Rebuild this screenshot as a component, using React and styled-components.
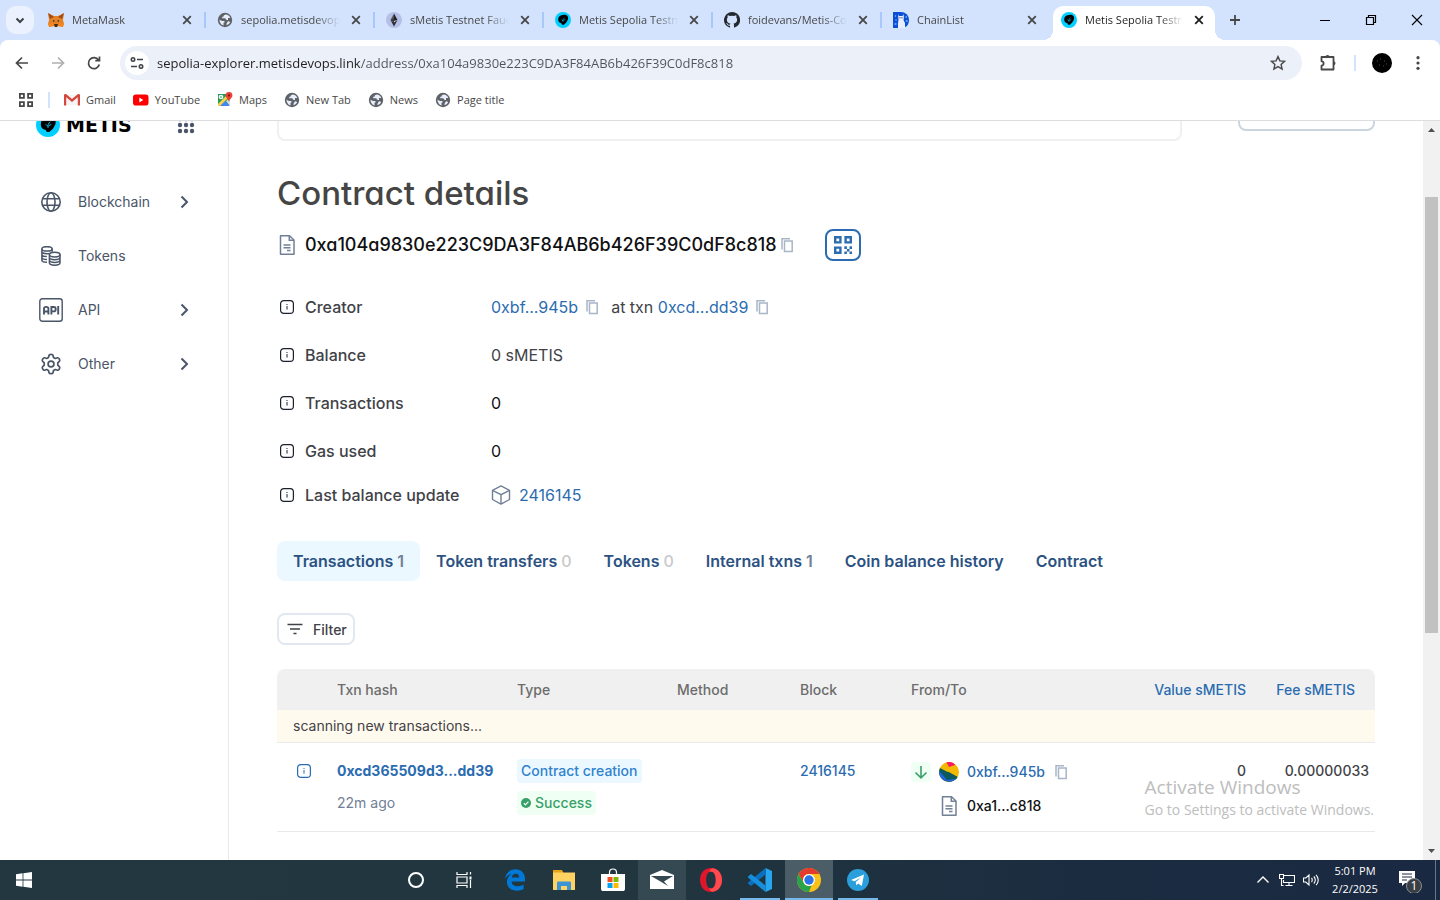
import React from "react";
import styled, { createGlobalStyle, css } from "styled-components";

const ui = '"Open Sans", "Noto Sans", sans-serif';
const body = 'Inter, "Liberation Sans", sans-serif';

const GlobalStyle = createGlobalStyle`
  *, *::before, *::after { box-sizing: border-box; }
  body { margin: 0; background: #fff; font-family: ${body}; color: #3f4247; }
  button, input { font: inherit; color: inherit; margin: 0; padding: 0; border: 0; background: none; }
  a { color: inherit; text-decoration: none; }
  svg { display: block; flex: none; }
  h1, h2, dl, dd, dt, ul, p { margin: 0; padding: 0; font-weight: inherit; }
  ul { list-style: none; }
`;

const Desktop = styled.div`
  display: flex;
  flex-direction: column;
  height: 100vh;
  overflow: hidden;
`;

/* ---------- browser frame ---------- */

const TabStrip = styled.header`
  display: flex;
  flex: none;
  height: 40px;
  background: #d3e3fd;
  font-family: ${ui};
  font-size: 11px;
`;

const TabSearch = styled.button`
  display: grid;
  place-items: center;
  width: 28px;
  height: 28px;
  margin: 6px 3px 0 6px;
  border-radius: 10px;
  background: #ebf2fe;
`;

const Tab = styled.div`
  position: relative;
  display: flex;
  align-items: center;
  gap: 8px;
  flex: 0 1 169px;
  min-width: 0;
  height: 40px;
  padding: 0 11px;
  color: #474747;
  ${(p) =>
    p.$separator &&
    css`
      &::after {
        content: "";
        position: absolute;
        right: 0;
        top: 12px;
        width: 2px;
        height: 16px;
        background: #a8c7fa;
      }
    `}
  ${(p) =>
    p.$active &&
    css`
      flex-basis: 162px;
      height: 34px;
      margin: 6px 0 0 2px;
      padding: 0 8px 6px;
      border-radius: 10px 10px 0 0;
      background: #fff;
      color: #1f1f1f;
      &::before,
      &::after {
        content: "";
        position: absolute;
        bottom: 0;
        width: 10px;
        height: 10px;
      }
      &::before {
        left: -10px;
        background: radial-gradient(circle at 0 0, transparent 10px, #fff 10px);
      }
      &::after {
        right: -10px;
        background: radial-gradient(circle at 100% 0, transparent 10px, #fff 10px);
      }
    `}
`;

const TabTitle = styled.span`
  flex: 1;
  min-width: 0;
  overflow: hidden;
  white-space: nowrap;
  line-height: 20px;
  mask-image: linear-gradient(90deg, #000 calc(100% - 24px), transparent);
`;

const IconButton = styled.button`
  display: grid;
  place-items: center;
  flex: none;
  width: ${(p) => p.$w || 16}px;
  height: ${(p) => p.$h || 16}px;
  color: ${(p) => p.$color || "#474747"};
`;

const WindowControls = styled.div`
  display: flex;
  margin-left: auto;
`;

const ToolbarBack = styled.div`
  flex: none;
  background: #d3e3fd;
`;

const Toolbar = styled.div`
  display: flex;
  align-items: center;
  height: 46px;
  padding: 0 4px;
  background: #fff;
  border-radius: 8px 8px 0 0;
`;

const Omnibox = styled.form`
  display: flex;
  align-items: center;
  flex: 1;
  height: 34px;
  margin: 0 8px;
  padding: 0 16px 0 5px;
  border-radius: 17px;
  background: #ecf0f9;
`;

const SiteInfo = styled.button`
  display: grid;
  place-items: center;
  width: 24px;
  height: 24px;
  border-radius: 12px;
  background: #fff;
`;

const Url = styled.input`
  flex: 1;
  min-width: 0;
  height: 24px;
  margin-left: 8px;
  outline: 0;
  font-family: ${ui};
  font-size: 13px;
  background: linear-gradient(90deg, #1f1f1f 204px, #50545a 204px);
  background-clip: text;
  -webkit-text-fill-color: transparent;
`;

const Rule = styled.span`
  width: 2px;
  height: 16px;
  background: #d3e3fd;
`;

const ToolbarRule = styled(Rule)`
  margin: 0 8px;
`;

const Bookmarks = styled.nav`
  display: flex;
  align-items: center;
  flex: none;
  height: 35px;
  padding: 0 18px 6px;
  border-bottom: 1px solid #dcdde0;
  background: #fff;
  font-family: ${ui};
  font-size: 11px;
  line-height: 16px;
  color: #474747;
`;

const BookmarkList = styled.div`
  display: flex;
  gap: 17px;
  margin-left: 14px;
`;

const BookmarkRule = styled(Rule)`
  margin: 0 0 0 14px;
`;

const Bookmark = styled.a`
  display: flex;
  align-items: center;
  gap: 6px;
`;

/* ---------- page ---------- */

const Viewport = styled.div`
  position: relative;
  display: flex;
  flex: 1;
  min-height: 0;
  overflow: hidden;
`;

const Sidebar = styled.aside`
  flex: none;
  width: 229px;
  padding: 0 36px;
  border-right: 1px solid #e8e9eb;
  color: #4a5568;
`;

const Brand = styled.div`
  display: flex;
  align-items: center;
  justify-content: space-between;
  height: 24px;
  margin: -8px -6px 47px 0;
`;

const Logo = styled.a`
  display: flex;
  align-items: center;
  gap: 6px;
  font-family: "DejaVu Sans", sans-serif;
  font-size: 19px;
  line-height: 24px;
  font-weight: 700;
  color: #000;
`;

const NavItem = styled.button`
  display: flex;
  align-items: center;
  width: 100%;
  height: 36px;
  margin-bottom: 18px;
  font-size: 14px;
  line-height: 20px;
`;

const NavIcon = styled.span`
  display: grid;
  place-items: center;
  width: 30px;
  margin-right: 12px;
`;

const NavLabel = styled.span`
  flex: 1;
  text-align: left;
`;

const Main = styled.main`
  flex: 1;
  min-width: 0;
  padding: 0 48px;
`;

const TopBar = styled.div`
  display: flex;
  align-items: flex-start;
  gap: 56px;
  margin: -30px 0 32px;
`;

const Search = styled.input`
  flex: 1;
  min-width: 0;
  height: 50px;
  padding: 0 16px;
  border: 2px solid #f0f0f1;
  border-radius: 8px;
`;

const Connect = styled.button`
  width: 137px;
  height: 40px;
  border: 2px solid #cbd5e0;
  border-radius: 8px;
`;

const Title = styled.h1`
  font-size: 33px;
  line-height: 40px;
  font-weight: 500;
  font-feature-settings: "cv11";
  color: #454545;
`;

const AddressRow = styled.div`
  display: flex;
  align-items: center;
  height: 32px;
  margin: 16px 0 34px;
`;

const Address = styled.h2`
  margin: 0 2px 0 8px;
  font-size: 18px;
  line-height: 24px;
  font-weight: 500;
  font-feature-settings: "cv11";
  color: #101112;
`;

const QrButton = styled.button`
  display: grid;
  place-items: center;
  width: 36px;
  height: 32px;
  margin-left: 30px;
  border: 2px solid #2b6cb0;
  border-radius: 8px;
  color: #2b6cb0;
`;

const Detail = styled.div`
  display: flex;
  align-items: center;
  height: 24px;
  margin-top: ${(p) => (p.$tight ? 20 : 24)}px;
  font-size: 16px;
  line-height: 24px;
  &:first-child { margin-top: 0; }
`;

const Term = styled.dt`
  display: flex;
  align-items: center;
  gap: 8px;
  width: 214px;
  font-weight: 500;
`;

const Value = styled.dd`
  display: flex;
  align-items: center;
  gap: ${(p) => (p.$wide ? 8 : 6)}px;
  color: ${(p) => (p.$dark ? "#101112" : "inherit")};
`;

const Link = styled.a`
  color: #2b6cb0;
  font-weight: ${(p) => (p.$bold ? 700 : p.$medium ? 500 : 400)};
`;

const AtTxn = styled.span`
  margin-left: 5px;
`;

const PageTabs = styled.div`
  display: flex;
  margin: 34px 0 32px;
`;

const PageTab = styled.button`
  height: 40px;
  padding: 0 16px;
  border-radius: 8px;
  background: ${(p) => (p.$active ? "#ebf8ff" : "transparent")};
  font-size: 16px;
  line-height: 24px;
  font-weight: 600;
  color: #2c5282;
`;

const Count = styled.span`
  font-weight: ${(p) => (p.$empty ? 500 : 600)};
  color: ${(p) => (p.$empty ? "#c8c9cb" : "#718096")};
`;

const FilterButton = styled.button`
  display: flex;
  align-items: center;
  gap: 8px;
  height: 32px;
  padding: 0 6px;
  border: 2px solid #e2e8f0;
  border-radius: 8px;
  font-size: 14px;
  font-weight: 500;
`;

const Table = styled.table`
  width: 100%;
  margin-top: 24px;
  border-collapse: separate;
  border-spacing: 0;
  table-layout: fixed;
  font-size: 14px;
  line-height: 20px;
`;

const Col = styled.col`
  width: ${(p) => p.$w};
`;

const Th = styled.th`
  height: 41px;
  padding: 0 ${(p) => (p.$last ? 20 : 6)}px 0 6px;
  background: #f0f0f0;
  text-align: ${(p) => (p.$right ? "right" : "left")};
  font-weight: 500;
  color: ${(p) => (p.$right ? "#2b6cb0" : "#6c6c6c")};
  white-space: nowrap;
  &:first-child { border-radius: 8px 0 0 0; }
  &:last-child { border-radius: 0 8px 0 0; }
`;

const Notice = styled.td`
  height: 33px;
  padding: 0 16px;
  border-bottom: 1px solid #e8e9eb;
  background: #fffaee;
`;

const Td = styled.td`
  height: 89px;
  padding: 16px 6px 0;
  border-bottom: 1px solid #e8e9eb;
  vertical-align: top;
  line-height: 24px;
  white-space: nowrap;
  font-weight: ${(p) => (p.$right ? 500 : 400)};
  text-align: ${(p) => (p.$right ? "right" : "left")};
`;

const Stack = styled.div`
  display: flex;
  flex-direction: column;
  align-items: flex-start;
  gap: 8px;
`;

const Muted = styled.span`
  color: #718096;
`;

const InfoButton = styled.button`
  display: grid;
  place-items: center;
  width: 100%;
  height: 24px;
  color: #2b6cb0;
`;

const Tag = styled.span`
  display: flex;
  align-items: center;
  gap: 4px;
  height: 24px;
  padding: 0 4px;
  border-radius: 4px;
  font-weight: 500;
  background: ${(p) => (p.$green ? "#f0fff4" : "#ebf8ff")};
  color: ${(p) => (p.$green ? "#38a169" : "#3182ce")};
`;

const Party = styled.div`
  display: flex;
  align-items: center;
  gap: 8px;
  height: 26px;
  padding-left: ${(p) => (p.$indent ? 28 : 0)}px;
  font-weight: 500;
  color: #101112;
`;

const Arrow = styled.span`
  display: grid;
  place-items: center;
  width: 20px;
  height: 20px;
  border-radius: 4px;
  background: #f0fff4;
  color: #38a169;
`;

const ScrollBar = styled.div`
  display: flex;
  flex-direction: column;
  flex: none;
  width: 17px;
  background: #f1f1f1;
`;

const ScrollSpace = styled.div`
  flex: ${(p) => p.$grow} 0 0;
`;

const Thumb = styled.div`
  flex: 436 0 0;
  margin: 0 2px;
  background: #c1c1c1;
`;

const Watermark = styled.div`
  position: absolute;
  right: 66px;
  bottom: 40px;
  font-family: ${ui};
  color: #bdbdbd;
  font-size: 14px;
  line-height: 20px;
  pointer-events: none;
`;

const WatermarkTitle = styled.p`
  font-size: 19px;
  line-height: 26px;
`;

/* ---------- taskbar ---------- */

const Taskbar = styled.footer`
  display: flex;
  flex: none;
  height: 40px;
  background: linear-gradient(90deg, #22373f 0%, #21363f 45%, #1b2c40 75%, #1a2942 100%);
  color: #fff;
  font-family: ${ui};
  font-size: 11px;
`;

const TaskGroup = styled.div`
  display: flex;
  gap: ${(p) => p.$gap || 0}px;
  margin-left: ${(p) => p.$left || 0}px;
`;

const Task = styled.button`
  display: grid;
  place-items: center;
  width: 48px;
  height: 40px;
  background: ${(p) => (p.$active ? "#4b5d66" : p.$hover ? "#344951" : "transparent")};
  ${(p) =>
    p.$running &&
    css`
      background-image: linear-gradient(#76b9ed, #76b9ed);
      background-repeat: no-repeat;
      background-position: bottom;
      background-size: ${p.$active ? 48 : 40}px 2px;
    `}
`;

const Tray = styled.div`
  display: flex;
  align-items: center;
  margin-left: auto;
`;

const Clock = styled.button`
  width: 64px;
  line-height: 18px;
  text-align: center;
`;

const ShowDesktop = styled.button`
  width: 5px;
  height: 40px;
  margin-left: 4px;
  border-left: 1px solid #6b7684;
`;

/* ---------- icons ---------- */

const Svg = ({ s = 16, h, box = "0 0 16 16", sw = 1.5, fill = "none", children }) => (
  <svg width={s} height={h || s} viewBox={box} fill={fill} stroke={fill === "none" ? "currentColor" : "none"} strokeWidth={sw} aria-hidden="true">
    {children}
  </svg>
);

const CloseIcon = () => (
  <Svg sw={1.8}><path d="M4.2 4.2l7.6 7.6M11.8 4.2l-7.6 7.6" /></Svg>
);

const Fox = () => (
  <Svg fill="#e4761b">
    <path d="M0 1l6 3h4l6-3-1 7 1 4-1 3-4-1-2 1H7l-2-1-4 1-1-3 1-4z" fill="#e88024" />
    <path d="M0 1l6 4-4 2zM16 1l-6 4 4 2z" fill="#9c4f1c" />
    <path d="M5 8l2 1-2 1zM11 8l-2 1 2 1z" fill="#233447" />
    <path d="M6 12h4l-1 3H7z" fill="#392b25" />
    <path d="M1 12l4-1 1 3-5 1zM15 12l-4-1-1 3 5 1z" fill="#f6851b" />
  </Svg>
);

const Globe = () => (
  <Svg fill="#5f6368">
    <circle cx="8" cy="8" r="7.2" />
    <path d="M9.2 2.5c-2 .2-2.8 1-2.7 2.2H5.2v1.5h3.2c.2 1.5 1.5 1.8 2.6 1.8v-2h2.2c-.4-1.700-1.900-3.100-4-3.500zM2.500 7.500c1.200 1.300 2.300 1.400 4.500 1.500 1.200.3.8 1.800-.500 1.800v2.600c-2.400-.5-4.200-3-4-5.900zM11.500 9.200c-1.200.2-1.200 1.500-2 2.500v1.400c1.600-.3 3-1.500 3.600-3.200z" fill="#e8eefb" />
  </Svg>
);

const Eth = () => (
  <Svg fill="#b5bfe8">
    <circle cx="8" cy="8" r="8" />
    <path d="M8 1.500v7.200L4.500 8z" fill="#555" /><path d="M8 1.500v7.200L11.500 8z" fill="#222" />
    <path d="M4.500 8L8 10.500 11.500 8 8 14.500z" fill="#2c2c2c" /><path d="M4.500 8L8 6.500v4z" fill="#383838" />
  </Svg>
);

const Metis = ({ s = 16 }) => (
  <Svg s={s} fill="#00cfff">
    <circle cx="8" cy="8" r="8" />
    <path d="M8.300 3c2.500-.8 5.200.8 4.800 3.500-.1 1.600-.9 2-1.400 3.300-.5 1.500-1.700 1.300-2.700 2.900H7.100c-.2-1.200-.6-1.500-1.600-1.700C3.500 10.500 3 8.500 3.300 6.500 3.600 4.200 6 2.800 8.300 3z" fill="#000" />
    <path d="M8 10c-.2-1.600.1-3 1.500-4.300M6.500 7.500L8 9M10.200 7.500L8.500 8.600" fill="none" stroke="#00cfff" strokeWidth=".6" />
  </Svg>
);

const Github = () => (
  <Svg fill="#24292f">
    <path d="M8 0a8 8 0 00-2.500 15.600c.4.100.5-.2.500-.4v-1.500c-2.200.5-2.700-.9-2.700-.9-.4-.900-.9-1.200-.9-1.200-.7-.5.100-.5.100-.5.800.1 1.200.8 1.200.8.700 1.200 1.900.9 2.300.7.100-.5.300-.9.500-1.100-1.800-.2-3.600-.9-3.600-4 0-.9.300-1.600.8-2.100-.1-.2-.4-1 .1-2.100 0 0 .7-.2 2.200.8a7.600 7.600 0 014 0c1.500-1 2.200-.8 2.200-.8.4 1.100.2 1.900.1 2.100.5.600.8 1.300.8 2.100 0 3.100-1.900 3.800-3.700 4 .3.200.6.700.6 1.500v2.200c0 .2.100.5.600.4A8 8 0 008 0z" />
  </Svg>
);

const Llama = () => (
  <Svg fill="#0b4fd6">
    <path d="M0 0h8a8 8 0 018 8c0 5-3 8-8 8H0z" />
    <path d="M5 2l1 2h3.500l1-2 .4 3.500-.4 2.500 1.500 3v5H5v-5l.5-3z" fill="#e9eefc" />
    <path d="M2 4h1M2.500 8h1M12.500 5H14M12.800 9h2M1.500 12h2" stroke="#7fb0ff" />
    <path d="M6.500 5.800h1M8.500 5.800h1" stroke="#123" strokeWidth="1" />
  </Svg>
);

const Gmail = () => (
  <Svg fill="#ea4335">
    <path d="M1 3h14v10H1z" fill="#f4f4f4" />
    <path d="M0 13.500V3.200C0 2 1.500 1.600 2.300 2.300L8 7l5.700-4.700c.8-.7 2.300-.3 2.300.9v10.300h-2.200V5.300L8 10 2.200 5.300v8.200z" fill="#d5473c" />
  </Svg>
);

const Youtube = () => (
  <Svg fill="#f00"><rect x="0" y="2.500" width="15.500" height="11" rx="2.800" /><path d="M6.300 5.600v4.800L10.300 8z" fill="#fff" /></Svg>
);

const Maps = () => (
  <Svg fill="#34a853">
    <path d="M1 2h11v12H1z" fill="#1f9d57" /><path d="M1 14l6-6 6 6z" fill="#4285f4" />
    <path d="M1 12l9-9 2 2-9 9H1z" fill="#fbd14b" /><path d="M9 9l4 5V6z" fill="#d8dce3" />
    <circle cx="4" cy="5" r="1.600" fill="none" stroke="#fff" />
    <path d="M12 0a3.400 3.400 0 00-3.400 3.400C8.600 6 11.500 6.500 12 10c.5-3.500 3.400-4 3.400-6.600A3.400 3.400 0 0012 0z" fill="#ea4335" /><circle cx="12" cy="3.400" r="1.100" fill="#811" />
  </Svg>
);

const InfoIcon = ({ s = 16 }) => (
  <Svg s={s} sw={1.2}>
    <rect x="1.600" y="1.600" width="12.800" height="12.800" rx="3.200" />
    <path d="M8 7v3.600M8 5v1" strokeWidth="1" />
  </Svg>
);

const Tint = styled.span`
  display: grid;
  padding: 0 ${(p) => p.$pad || 0}px;
  color: ${(p) => p.$c};
`;

const DetailInfo = () => <Tint $c="#1a202c" $pad={2}><InfoIcon /></Tint>;

const CopyButton = () => (
  <IconButton $color="#a9b6c8" $w={16} $h={20} aria-label="Copy">
    <Svg sw={1.5}><path d="M5.500 4h7.700v10.500H5.500z" /><path d="M3 12.500V1.700h8" /></Svg>
  </IconButton>
);

const DocIcon = () => (
  <Tint $c="#718096">
    <Svg s={20} box="0 0 20 20" sw={1.5}>
      <path d="M3.500.8h9L17 5v14.200H3.500z" strokeLinejoin="round" /><path d="M12.300.8v4.400H17" /><path d="M6.500 9.900h7M6.500 12.700h7M10 15.500h3.500" />
    </Svg>
  </Tint>
);

const CubeIcon = () => (
  <Tint $c="#718096">
    <Svg s={20} box="0 0 20 20" sw={1.4}>
      <path d="M10 .9l8.500 4.400v9.200L10 19.100l-8.500-4.600V5.300z" strokeLinejoin="round" /><path d="M1.500 5.300l8.500 4.400 8.500-4.400M10 9.700v9.400" />
    </Svg>
  </Tint>
);

const GlobeNav = () => (
  <Svg s={20} box="0 0 20 20" sw={1.6}>
    <circle cx="10" cy="10" r="9.200" /><ellipse cx="10" cy="10" rx="4" ry="9.200" /><path d="M1.700 6.700h16.600M1.700 13.300h16.600" />
  </Svg>
);

const CoinsNav = () => (
  <Svg s={20} box="0 0 20 20" sw={1.5}>
    <ellipse cx="6" cy="2.900" rx="5.100" ry="2.200" />
    <path d="M.9 2.800v11.500c0 1 2 2 5.100 2M11.100 2.800v3M1 5.600c0 1.200 2.200 2.100 5 2.100 1 0 1.800-.1 2.500-.3M1 8.500c0 1.100 2 2 4.800 2.100M1 11.400c0 1.100 2.200 2 5 2.100" />
    <ellipse cx="13.700" cy="8.600" rx="5.300" ry="2.400" />
    <path d="M8.400 8.600v8.200c0 1.300 2.300 2.400 5.300 2.400s5.300-1.100 5.300-2.400V8.600M8.500 11.300c0 1.300 2.300 2.400 5.200 2.400s5.200-1.100 5.200-2.400M8.500 14c0 1.300 2.300 2.400 5.200 2.400s5.200-1.100 5.200-2.400" />
  </Svg>
);

const ApiNav = () => (
  <Svg s={24} box="0 0 24 24" sw={1.4}>
    <rect x=".8" y=".8" width="22.400" height="22.400" rx="2.500" />
    <path d="M5 16.500v-6c0-1 .7-1.600 2.200-1.600s2.200.6 2.200 1.600v6M5 13.500h4.400M12.400 16.500V9h2.400c1.300 0 1.900.7 1.900 2.200s-.6 2.200-1.900 2.200h-2.400M19.200 8v8.500" strokeWidth="1.900" />
  </Svg>
);

const GearNav = () => (
  <Svg s={22} box="0 0 22 22" sw={1.7}>
    <path d="M9 2.300C9.300 1 12.700 1 13 2.300l.5 2.200 1.800 1 2.200-.7c1.200-.4 2.900 2.500 2 3.400l-1.700 1.600v2.400l1.700 1.600c.9.900-.8 3.800-2 3.400l-2.200-.7-1.800 1-.5 2.200c-.3 1.300-3.700 1.300-4 0l-.5-2.200-1.800-1-2.200.7c-1.200.4-2.900-2.500-2-3.400l1.700-1.600V9.800L2.500 8.200c-.9-.9.800-3.800 2-3.400l2.200.7 1.800-1z" strokeLinejoin="round" />
    <circle cx="11" cy="11" r="2.900" />
  </Svg>
);

const Chevron = () => (
  <Svg s={16} sw={2}><path d="M5.500 2.500L11 8l-5.500 5.500" /></Svg>
);

const QrIcon = () => (
  <Svg s={20} box="0 0 20 20" sw={2.4}>
    <path d="M2.200 2.200h5.200v5.200H2.200zM12.600 2.200h5.200v5.200h-5.200zM2.200 12.600h5.200v5.200H2.200z" />
    <path d="M11.300 11.300h2.600v2.600h-2.600zM13.900 13.900h2.600v2.600h-2.600zM16.500 11.300H19v2.600h-2.500zM11.300 16.500h2.600V19h-2.600zM16.500 16.500H19V19h-2.500z" fill="currentColor" stroke="none" />
  </Svg>
);

const Identicon = () => (
  <Svg s={20} box="0 0 20 20" fill="#f3b800">
    <circle cx="10" cy="10" r="10" />
    <path d="M1 6L18.500 15A10 10 0 01.800 13.800 10 10 0 011 6z" fill="#0b5a5e" />
    <path d="M9 9.500L18.500 15l-1.500 2.200L11 17z" fill="#0b5a5e" />
    <path d="M.2 9L8 18l9-1.200A10 10 0 01.2 9z" fill="#2364e8" />
    <path d="M7.500.3A10 10 0 0115 1.500L16 3l-6 2z" fill="#fb1866" />
  </Svg>
);

const bookmarks = [
  ["Gmail", Gmail], ["YouTube", Youtube], ["Maps", Maps], ["New Tab", Globe], ["News", Globe], ["Page title", Globe],
];

const tabs = [
  ["MetaMask", Fox], ["sepolia.metisdevops.link", Globe], ["sMetis Testnet Faucet", Eth],
  ["Metis Sepolia Testnet", Metis], ["foidevans/Metis-Code", Github], ["ChainList", Llama], ["Metis Sepolia Testnet", Metis],
];

const navItems = [
  ["Blockchain", GlobeNav, true], ["Tokens", CoinsNav, false], ["API", ApiNav, true], ["Other", GearNav, true],
];

const pageTabs = [
  ["Transactions", 1], ["Token transfers", 0], ["Tokens", 0], ["Internal txns", 1], ["Coin balance history"], ["Contract"],
];

function Browser() {
  return (
    <>
      <TabStrip>
        <TabSearch aria-label="Search tabs"><Svg sw={2}><path d="M4.500 6.500L8 10l3.500-3.500" /></Svg></TabSearch>
        {tabs.map(([title, Icon], i) => (
          <Tab key={i} $active={i === 6} $separator={i < 5}>
            <Icon />
            <TabTitle>{title}</TabTitle>
            <IconButton aria-label="Close tab" $color={i === 6 ? "#1f1f1f" : "#474747"}><CloseIcon /></IconButton>
          </Tab>
        ))}
        <IconButton $w={40} $h={40} aria-label="New tab"><Svg sw={1.8}><path d="M8 3v10M3 8h10" /></Svg></IconButton>
        <WindowControls>
          <IconButton $w={46} $h={40} $color="#000" aria-label="Minimize"><Svg sw={1}><path d="M3 8.500h10" /></Svg></IconButton>
          <IconButton $w={46} $h={40} $color="#000" aria-label="Restore"><Svg sw={1.2}><path d="M3.500 5.500h7v7h-7zM5.500 5.500v-2h7v7h-2" /></Svg></IconButton>
          <IconButton $w={46} $h={40} $color="#000" aria-label="Close"><Svg sw={1.1}><path d="M3 3l10 10M13 3L3 13" /></Svg></IconButton>
        </WindowControls>
      </TabStrip>
      <ToolbarBack>
        <Toolbar>
          <IconButton $w={36} $h={36} aria-label="Back"><Svg sw={1.7}><path d="M14 8H3M8 2.500L2.500 8 8 13.500" /></Svg></IconButton>
          <IconButton $w={36} $h={36} $color="#b0b0b0" aria-label="Forward"><Svg sw={1.7}><path d="M2 8h11M8 2.500L13.500 8 8 13.500" /></Svg></IconButton>
          <IconButton $w={36} $h={36} aria-label="Reload"><Svg sw={1.7}><path d="M13.300 9.500A5.500 5.500 0 1112.500 5M13.500 1.500v4.200H9.300" /></Svg></IconButton>
          <Omnibox onSubmit={(e) => e.preventDefault()}>
            <SiteInfo type="button" aria-label="Site information">
              <Svg sw={1.6}><circle cx="4" cy="4.500" r="1.700" /><path d="M8 4.500h6M2 11.500h6" /><circle cx="12" cy="11.500" r="1.700" /></Svg>
            </SiteInfo>
            <Url aria-label="Address" defaultValue="sepolia-explorer.metisdevops.link/address/0xa104a9830e223C9DA3F84AB6b426F39C0dF8c818" />
            <IconButton type="button" aria-label="Bookmark"><Svg sw={1.4}><path d="M8 1.600l1.900 4.300 4.700.4-3.500 3.100 1 4.600L8 11.600 3.900 14l1-4.600L1.400 6.300l4.700-.4z" /></Svg></IconButton>
          </Omnibox>
          <IconButton $w={36} $h={36} aria-label="Extensions">
            <Svg s={18} box="0 0 18 18" sw={1.8}><path d="M2.500 3h12v12.500h-12v-3.800c2.800-.5 2.800-4 0-4.500z" strokeLinejoin="round" /><path d="M6.500 3a2 2 0 014 0zM14.500 7.200a2 2 0 010 4z" fill="currentColor" stroke="none" /></Svg>
          </IconButton>
          <ToolbarRule />
          <IconButton $w={36} $h={36} aria-label="Profile">
            <Svg s={20} box="0 0 20 20" fill="#000"><circle cx="10" cy="10" r="10" /><path d="M5 8h1M8 6h1M12 8h1M14 11h1M7 12h1M11 13h1" stroke="#333" /></Svg>
          </IconButton>
          <IconButton $w={36} $h={36} aria-label="Menu"><Svg fill="#474747"><circle cx="8" cy="2.700" r="1.600" /><circle cx="8" cy="8" r="1.600" /><circle cx="8" cy="13.300" r="1.600" /></Svg></IconButton>
        </Toolbar>
      </ToolbarBack>
      <Bookmarks>
        <IconButton aria-label="Apps"><Svg sw={1.8}><path d="M1.900 1.900h4v4h-4zM10.100 1.900h4v4h-4zM1.900 10.100h4v4h-4zM10.100 10.100h4v4h-4z" /></Svg></IconButton>
        <BookmarkRule />
        <BookmarkList>
          {bookmarks.map(([t, Icon]) => <Bookmark key={t} href="#"><Icon />{t}</Bookmark>)}
        </BookmarkList>
      </Bookmarks>
    </>
  );
}

function Explorer() {
  return (
    <Viewport>
      <Sidebar>
        <Brand>
          <Logo href="#"><Metis s={24} />METIS</Logo>
          <IconButton $w={24} $h={24} $color="#4a5568" aria-label="Apps">
            <Svg s={18} box="0 0 18 18" fill="#4a5568">
              {[3, 9, 15].map((y) => [3, 9, 15].map((x) => <circle key={x + "-" + y} cx={x} cy={y} r="2.200" />))}
            </Svg>
          </IconButton>
        </Brand>
        <nav>
          {navItems.map(([label, Icon, more]) => (
            <NavItem key={label}>
              <NavIcon><Icon /></NavIcon>
              <NavLabel>{label}</NavLabel>
              {more && <Chevron />}
            </NavItem>
          ))}
        </nav>
      </Sidebar>
      <Main>
        <TopBar>
          <Search aria-label="Search" />
          <Connect aria-label="Connect wallet" />
        </TopBar>
        <Title>Contract details</Title>
        <AddressRow>
          <DocIcon />
          <Address>0xa104a9830e223C9DA3F84AB6b426F39C0dF8c818</Address>
          <CopyButton />
          <QrButton aria-label="QR code"><QrIcon /></QrButton>
        </AddressRow>
        <dl>
          <Detail>
            <Term><DetailInfo />Creator</Term>
            <Value>
              <Link href="#">0xbf...945b</Link><CopyButton />
              <AtTxn>at txn <Link href="#">0xcd...dd39</Link></AtTxn><CopyButton />
            </Value>
          </Detail>
          <Detail><Term><DetailInfo />Balance</Term><Value>0 sMETIS</Value></Detail>
          <Detail><Term><DetailInfo />Transactions</Term><Value $dark>0</Value></Detail>
          <Detail><Term><DetailInfo />Gas used</Term><Value $dark>0</Value></Detail>
          <Detail $tight><Term><DetailInfo />Last balance update</Term><Value $wide><CubeIcon /><Link href="#">2416145</Link></Value></Detail>
        </dl>
        <PageTabs role="tablist">
          {pageTabs.map(([label, count], i) => (
            <PageTab key={label} role="tab" aria-selected={i === 0} $active={i === 0}>
              {label}{count !== undefined && <> <Count $empty={count === 0}>{count}</Count></>}
            </PageTab>
          ))}
        </PageTabs>
        <FilterButton>
          <Svg s={20} box="0 0 20 20" sw={1.6}><path d="M2.500 5.500h15M5 10h10M8.500 14.500h3" /></Svg>
          Filter
        </FilterButton>
        <Table>
          <colgroup>
            <Col $w="54px" /><Col $w="180px" /><Col $w="160px" /><Col $w="123px" /><Col $w="111px" /><Col $w="auto" /><Col $w="108px" /><Col $w="123px" />
          </colgroup>
          <thead>
            <tr>
              <Th aria-label="Info" /><Th>Txn hash</Th><Th>Type</Th><Th>Method</Th><Th>Block</Th><Th>From/To</Th>
              <Th $right>Value sMETIS</Th><Th $right $last>Fee sMETIS</Th>
            </tr>
          </thead>
          <tbody>
            <tr><Notice colSpan={8}>scanning new transactions...</Notice></tr>
            <tr>
              <Td><InfoButton aria-label="Transaction preview"><InfoIcon /></InfoButton></Td>
              <Td><Stack><Link href="#" $bold>0xcd365509d3...dd39</Link><Muted>22m ago</Muted></Stack></Td>
              <Td>
                <Stack>
                  <Tag>Contract creation</Tag>
                  <Tag $green>
                    <Svg s={10} box="0 0 10 10" fill="#38a169"><circle cx="5" cy="5" r="5" /><path d="M2.800 5.200l1.600 1.600 3-3.200" fill="none" stroke="#fff" strokeWidth="1.200" /></Svg>
                    Success
                  </Tag>
                </Stack>
              </Td>
              <Td />
              <Td><Link href="#" $medium>2416145</Link></Td>
              <Td>
                <Stack>
                  <Party>
                    <Arrow><Svg sw={1.6}><path d="M8 2v11.500M2.500 8.500L8 13.800l5.500-5.300" /></Svg></Arrow>
                    <Identicon /><Link href="#" $medium>0xbf...945b</Link><CopyButton />
                  </Party>
                  <Party $indent><DocIcon />0xa1...c818</Party>
                </Stack>
              </Td>
              <Td $right>0</Td>
              <Td $right>0.00000033</Td>
            </tr>
          </tbody>
        </Table>
      </Main>
      <ScrollBar aria-hidden="true">
        <Svg s={17} box="0 0 17 17" fill="#505050"><path d="M5 11l3.500-4 3.500 4z" /></Svg>
        <ScrollSpace $grow={59} /><Thumb /><ScrollSpace $grow={210} />
        <Svg s={17} box="0 0 17 17" fill="#505050"><path d="M5 6l3.500 4L12 6z" /></Svg>
      </ScrollBar>
      <Watermark>
        <WatermarkTitle>Activate Windows</WatermarkTitle>
        <p>Go to Settings to activate Windows.</p>
      </Watermark>
    </Viewport>
  );
}

function WindowsBar() {
  return (
    <Taskbar>
      <Task aria-label="Start">
        <Svg fill="#fff"><path d="M0 2.200l6.600-.9v6.300H0zM7.400 1.200L16 0v7.600H7.400zM0 8.400h6.600v6.300L0 13.800zM7.400 8.400H16V16l-8.600-1.200z" /></Svg>
      </Task>
      <TaskGroup $left={344}>
        <Task aria-label="Cortana"><Svg s={18} box="0 0 18 18" sw={2}><circle cx="9" cy="9" r="7" /></Svg></Task>
        <Task aria-label="Task view">
          <Svg sw={1.2}><path d="M1 5h10v6H1zM1 0v2.500h10V0M1 16v-2.500h10V16M14.500 0v2.500M14.500 8v8" /><path d="M13.500 4.500h2v3h-2z" fill="#fff" stroke="none" /></Svg>
        </Task>
      </TaskGroup>
      <TaskGroup $left={3} $gap={1}>
        <Task aria-label="Edge">
          <Svg s={22} box="0 0 22 22" fill="#0078d7"><path d="M1 10C1.600 4.300 5.700.3 11.400.3c6 0 9.600 4.200 9.600 9.700v2.500H7.600c.2 3.200 2.800 4.800 6 4.800 2.400 0 4.500-.7 6-1.700v4.500c-1.800 1-4.200 1.600-6.900 1.600-6 0-9.800-3.500-9.800-9 0-3.200 1.700-6 4.700-7.600C4.500 5.800 2.300 7.300 1 10zm6.800-1.400h7.400c0-2.400-1.300-3.800-3.500-3.800-2.100 0-3.600 1.500-3.900 3.800z" /></Svg>
        </Task>
        <Task aria-label="File Explorer">
          <Svg s={22} box="0 0 22 22"><g stroke="none"><path d="M0 1h9l1.500 3H0z" fill="#e8a317" /><path d="M0 3.500h22V21H0z" fill="#ffd262" /><path d="M4 21v-7c0-1 .5-1.500 1.500-1.500h11c1 0 1.500.5 1.500 1.500v7h-4v-4H8v4z" fill="#3b93d8" /></g></Svg>
        </Task>
        <Task aria-label="Store">
          <Svg s={24} box="0 0 24 24"><path d="M8.500 6V4.500C8.500 2 10 1 12 1s3.500 1 3.500 3.500V6" stroke="#fff" strokeWidth="1.200" /><g stroke="none"><path d="M0 6h24v15c0 1.500-1 2-2 2H2c-1 0-2-.5-2-2z" fill="#fff" /><path d="M6.500 9h5v5h-5z" fill="#f25022" /><path d="M12.500 9h5v5h-5z" fill="#7fba00" /><path d="M6.500 15h5v5h-5z" fill="#00a4ef" /><path d="M12.500 15h5v5h-5z" fill="#ffb900" /></g></Svg>
        </Task>
        <Task aria-label="Mail" $hover>
          <Svg s={24} box="0 0 24 24" fill="#fff"><path d="M0 7l12-5 12 5v14H0z" /><path d="M1 8h22l-9 5.500 4 4.500-7.500-4.500z" fill="#344951" /></Svg>
        </Task>
        <Task aria-label="Opera">
          <Svg s={24} box="0 0 24 24" fill="#e0162b"><path d="M12 0C5 0 1 5.500 1 12s4 12 11 12 11-5.500 11-12S19 0 12 0zm0 3.500c3 0 4.800 3.600 4.800 8.500s-1.800 8.500-4.800 8.500S7.200 17 7.200 12 9 3.500 12 3.500z" fillRule="evenodd" /><path d="M14 .3c5 .8 9 5.300 9 11.700s-4 11-9 11.700c-1.500 0-3-1-4-3.500 4 1.500 6.800-2 6.800-8.200S14 2.300 10 3.800C11 1.300 12.500.3 14 .3z" fill="#ff4b50" /></Svg>
        </Task>
        <Task aria-label="Visual Studio Code" $running>
          <Svg s={24} box="0 0 24 24"><g stroke="none"><path d="M17.500 0L24 3v18l-6.500 3z" fill="#27a5ee" /><path d="M17.500 0v6.500L3 18l-3-2.500v-1z" fill="#0b6fc0" /><path d="M17.500 24v-6.500L3 6 0 8.500v1z" fill="#158fdc" /></g></Svg>
        </Task>
        <Task aria-label="Chrome" $running $active>
          <Svg s={24} box="0 0 24 24"><g stroke="none"><circle cx="12" cy="12" r="12" fill="#fbc116" /><path d="M1.600 6A12 12 0 0122.400 6H12a6 6 0 00-5.200 9z" fill="#e33b2e" /><path d="M1.600 6l5.200 9A6 6 0 0012 18l2.500-.6L12 24A12 12 0 011.600 6z" fill="#2ba24c" /><circle cx="12" cy="12" r="6" fill="#fff" /><circle cx="12" cy="12" r="4.700" fill="#2b74e8" /></g></Svg>
        </Task>
        <Task aria-label="Telegram" $running>
          <Svg s={22} box="0 0 22 22" fill="#2a9fdb"><circle cx="11" cy="11" r="11" /><path d="M4 11l13-5.500-2.200 11.500-3.600-2.600-2 1.800-.4-3.200L14 8.500 7.500 12.200z" fill="#fff" /></Svg>
        </Task>
      </TaskGroup>
      <Tray>
        <IconButton $w={24} $h={40} $color="#fff" aria-label="Show hidden icons"><Svg sw={1.4}><path d="M2.500 10.500L8 5l5.500 5.500" /></Svg></IconButton>
        <IconButton $w={24} $h={40} $color="#fff" aria-label="Network"><Svg sw={1.1}><path d="M5 3.500h10.500v7H4.500V8M10 10.500v3M6.500 13.500h7M.5 2.500h4v4h-4zM2.500 6.500v7h2" /></Svg></IconButton>
        <IconButton $w={24} $h={40} $color="#fff" aria-label="Volume"><Svg sw={1.1}><path d="M.5 6h2.300L6 3v10L2.800 10H.5zM8.500 6c1 1 1 3 0 4M10.800 4.500c2 2 2 5 0 7M13 2.800c3 3 3 7.400 0 10.400" /></Svg></IconButton>
        <Clock>5:01 PM<br />2/2/2025</Clock>
        <IconButton $w={44} $h={40} $color="#fff" aria-label="Notifications">
          <svg width="26" height="26" viewBox="0 0 26 26">
            <path d="M3 4h16v12H9l-3 3v-3H3z" fill="#fff" /><path d="M6 7h10M6 10h10M6 13h5" stroke="#1b2c40" />
            <circle cx="18" cy="19" r="7.500" fill="#3a3f44" stroke="#8a8f94" />
            <text x="18" y="23" textAnchor="middle" fontFamily="Open Sans, sans-serif" fontSize="12" fill="#fff">1</text>
          </svg>
        </IconButton>
        <ShowDesktop aria-label="Show desktop" />
      </Tray>
    </Taskbar>
  );
}

export default function App() {
  return (
    <Desktop>
      <GlobalStyle />
      <Browser />
      <Explorer />
      <WindowsBar />
    </Desktop>
  );
}
